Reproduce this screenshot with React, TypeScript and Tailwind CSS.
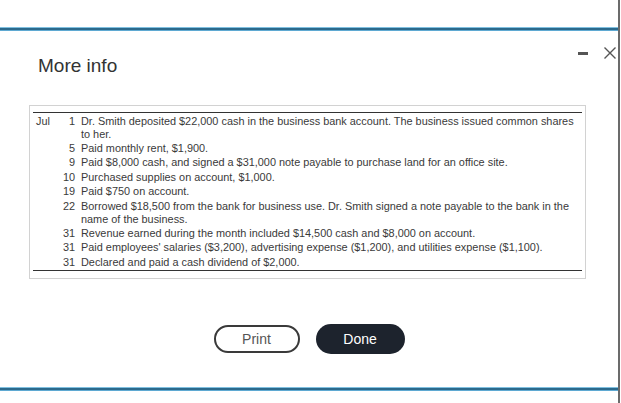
const entries: { month?: string; day: number; text: string }[] = [
	{ month: 'Jul', day: 1, text: 'Dr. Smith deposited $22,000 cash in the business bank account. The business issued common shares to her.' },
	{ day: 5, text: 'Paid monthly rent, $1,900.' },
	{ day: 9, text: 'Paid $8,000 cash, and signed a $31,000 note payable to purchase land for an office site.' },
	{ day: 10, text: 'Purchased supplies on account, $1,000.' },
	{ day: 19, text: 'Paid $750 on account.' },
	{ day: 22, text: 'Borrowed $18,500 from the bank for business use. Dr. Smith signed a note payable to the bank in the name of the business.' },
	{ day: 31, text: 'Revenue earned during the month included $14,500 cash and $8,000 on account.' },
	{ day: 31, text: "Paid employees' salaries ($3,200), advertising expense ($1,200), and utilities expense ($1,100)." },
	{ day: 31, text: 'Declared and paid a cash dividend of $2,000.' }
];

function BlueRule() {
	return (
		<div className="flex flex-col">
			<div className="h-px bg-[#7fc0e0]" />
			<div className="h-[2px] bg-[#2c6a8c]" />
			<div className="h-px bg-[#5fa9d2]" />
		</div>
	);
}

export default function App() {
	return (
		<div className="flex h-[403px] w-[621px] overflow-hidden bg-white font-['Liberation_Sans',Arial,sans-serif] text-[#333]">
			<div className="flex w-[618px] flex-col">
				<div className="h-[27px]" />
				<BlueRule />

				<div className="relative flex h-[356px] flex-col">
					{/* window controls */}
					<div className="absolute left-[578px] top-[21px] h-[3px] w-[10px] bg-[#555]" />
					<svg className="absolute left-[603px] top-[15px]" width="14" height="14" viewBox="0 0 14 14">
						<path d="M1.5 1.5 L12.5 12.5 M12.5 1.5 L1.5 12.5" stroke="#555" strokeWidth="1.4" fill="none" />
					</svg>

					<h2 className="pl-[38px] pt-[23px] text-[19px] leading-[24px] font-normal text-[#333]">More info</h2>

					<div className="ml-[29px] mt-[27px] h-[174px] w-[557px] border border-[#d2d2d2] px-[3px] pt-[6px]">
						<div className="border-y border-[#333] pb-[1px] pt-[1px]">
							{entries.map((entry, i) => (
								<div key={i} className="flex py-[0.7px] text-[10.9px] leading-[13px] text-[#3a3a3a]">
									<div className="w-[28px] pl-[3px]">{entry.month ?? ''}</div>
									<div className="w-[14px] text-right">{entry.day}</div>
									<div className="ml-[6px] flex-1">{entry.text}</div>
								</div>
							))}
						</div>
					</div>

					<div className="mt-[46px] flex justify-center gap-[16px]">
						<button className="h-[28px] w-[86px] rounded-full border-2 border-[#3a3a3a] bg-white text-[14px] text-[#555]">
							Print
						</button>
						<button className="-mt-px h-[30px] w-[89px] rounded-full bg-[#1d232d] text-[14px] text-white">
							Done
						</button>
					</div>
				</div>

				<BlueRule />
			</div>
			<div className="w-[2px] bg-[#6b6b6b]" />
			<div className="w-px bg-white" />
		</div>
	);
}
